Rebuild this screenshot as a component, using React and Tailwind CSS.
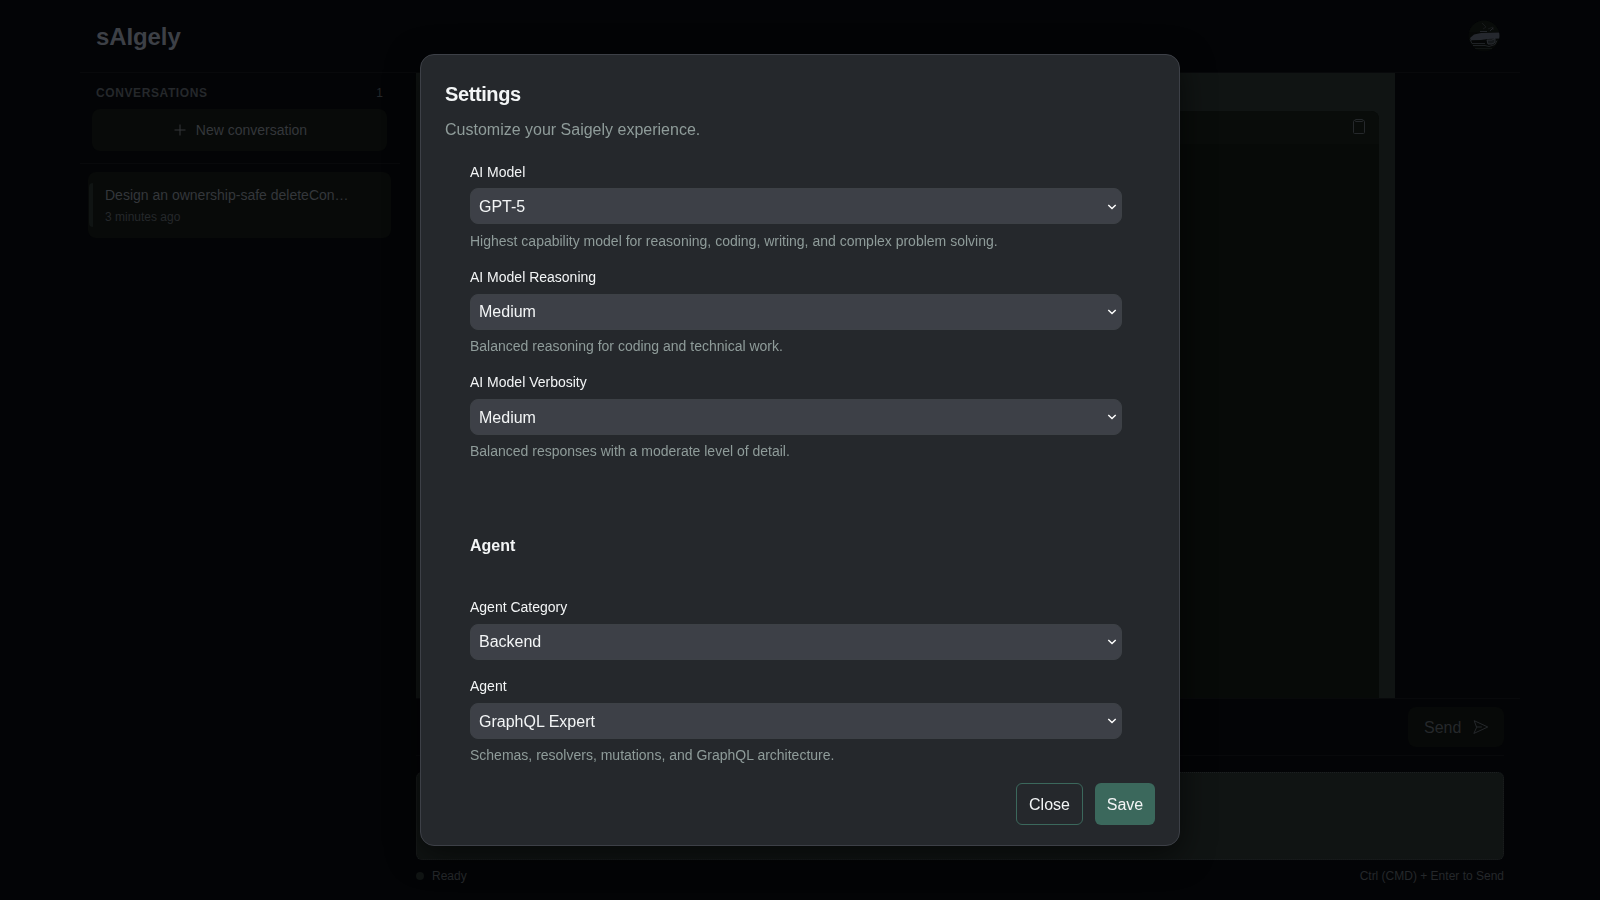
import React from "react";

function Field({ label, value, hint, className }) {
  return (
    <div className={className}>
      <label className="block h-[21px] text-[14px] leading-[21px] text-[#f3f5f6]">{label}</label>
      <div className="mt-[5.6px] grid h-9 items-center">
        <select
          defaultValue={value}
          className="col-start-1 row-start-1 block h-9 w-full appearance-none rounded-lg border border-[#3d4146] bg-[#3d4047] px-2 pt-[1.4px] text-[16px] text-[#f3f5f6] outline-none"
        >
          <option>{value}</option>
        </select>
        <svg
          className="pointer-events-none col-start-1 row-start-1 mr-[5px] mt-[0.6px] h-[6px] w-[10px] justify-self-end text-white"
          viewBox="0 0 10 6"
          fill="none"
          stroke="currentColor"
          strokeWidth="1.400"
        >
          <path d="M1.300 1 5 4.600 8.700 1" />
        </svg>
      </div>
      {hint && <p className="mt-[6.4px] h-[21px] text-[14px] leading-[21px] text-[#8f9c9a]">{hint}</p>}
    </div>
  );
}

function PlusIcon() {
  return (
    <svg className="size-3" viewBox="0 0 12 12" fill="none" stroke="currentColor" strokeWidth="1">
      <path d="M6 0.5v11M0.5 6h11" />
    </svg>
  );
}

function ClipboardIcon() {
  return (
    <svg className="h-4 w-3" viewBox="0 0 12 16" fill="none" stroke="currentColor" strokeWidth="1" strokeLinejoin="round">
      <path d="M2 1.500h-.5a1 1 0 0 0-1 1V13.500a1 1 0 0 0 1 1h9a1 1 0 0 0 1-1V2.500a1 1 0 0 0-1-1H10" />
      <path d="M2.500 .5h7a.5.5 0 0 1 .5.5v.5a1 1 0 0 1-1 1H3a1 1 0 0 1-1-1V1a.5.5 0 0 1 .5-.5z" />
    </svg>
  );
}

function SendIcon() {
  return (
    <svg className="size-4" viewBox="0 0 16 16" fill="none" stroke="currentColor" strokeWidth="1" strokeLinecap="round" strokeLinejoin="round">
      <path d="M3.500 8 1.200 1.700 14.800 8 1.200 14.300z" />
      <path d="M3.500 8h5" />
    </svg>
  );
}

function Avatar() {
  return (
    <svg className="size-8" viewBox="0 0 32 32">
      <defs>
        <clipPath id="avatar">
          <circle cx="16" cy="16" r="15.500" />
        </clipPath>
      </defs>
      <g clipPath="url(#avatar)">
        <rect width="32" height="32" fill="#060807" />
        <path d="M0 0h32v12H0z" fill="#080b09" />
        <path d="M14 3l4 4-3 2M20 9l5-2v3" stroke="#16191a" fill="none" />
        <path d="M2 18l4-3.500 7-1.500 19-.5v6l-12 .5-7 1-10 .5z" fill="#25282e" />
        <path d="M12 11.500h7M22 11l3-3" stroke="#222529" fill="none" />
        <path d="M4 20.500h15v3H5z" fill="#050606" />
        <path d="M2 19.500l2 4h13M5 25.500h12l4 1 6-2 2-4" stroke="#1e2124" fill="none" />
        <path d="M19 20h5l3-1.500v4l-3 1.500h-4z" fill="#15181a" stroke="#2a2d32" />
        <path d="M7 28.500h17" stroke="#101413" />
      </g>
    </svg>
  );
}

function Sidebar() {
  return (
    <aside className="w-[320px] shrink-0">
      <div className="h-[91px] border-b border-[#08090b] pt-[9px]">
        <div className="flex h-[21px] items-center justify-between pl-4 pr-[17px] text-[12px] text-[#25282b]">
          <h2 className="font-bold tracking-[0.6px]">CONVERSATIONS</h2>
          <span>1</span>
        </div>
        <button className="ml-3 mt-[6px] flex h-[42px] w-[295px] items-center justify-center gap-[10px] rounded-lg bg-[#080a09] pl-[2px] text-[14px] text-[#34373b]">
          <PlusIcon />
          New conversation
        </button>
      </div>
      <div className="ml-2 mt-2 flex h-[66px] w-[303px] rounded-lg bg-[#080a09] pl-px pt-[11px]">
        <div className="h-11 w-1 rounded-l-full bg-[#101413]" />
        <div className="ml-3 pt-px">
          <p className="text-[14px] leading-[22px] text-[#34373b]">Design an ownership-safe deleteCon…</p>
          <p className="text-[12px] leading-[22px] text-[#25282b]">3 minutes ago</p>
        </div>
      </div>
    </aside>
  );
}

function Workspace() {
  return (
    <main className="w-[1120px] shrink-0 pl-4">
      <div className="h-[625px] w-[979px] bg-[#101413] pl-4 pr-4 pt-[38px]">
        <div className="h-[587px] rounded-tr-lg bg-[#070a08]">
          <div className="flex h-[33px] justify-end rounded-tr-lg bg-[#090c0a] pr-[14px] pt-2 text-[#25282b]">
            <ClipboardIcon />
          </div>
        </div>
      </div>
      <div className="h-px bg-[#08090b]" />
      <div className="mr-4 flex h-[57px] justify-end border-b border-[#08090b] pt-2">
        <button className="flex h-10 w-24 items-center gap-3 rounded-lg bg-[#070908] pl-4 text-[16px] text-[#25282b]">
          <span className="pt-[2px]">Send</span>
          <SendIcon />
        </button>
      </div>
      <div className="mr-4 mt-4 h-[88px] rounded-md border border-dotted border-[#1c1f21] bg-[#101413]" />
      <div className="mr-4 mt-[6px] flex h-5 items-center justify-between text-[12px] text-[#25282b]">
        <span className="flex items-center gap-2">
          <i className="size-2 rounded-full bg-[#101413]" />
          Ready
        </span>
        <span>Ctrl (CMD) + Enter to Send</span>
      </div>
    </main>
  );
}

function SettingsDialog() {
  return (
    <div className="fixed inset-0 flex items-center justify-center">
      <section className="h-[792px] w-[760px] rounded-[14px] border border-[#3d4047] bg-[#25282c] px-6 shadow-[0_8px_32px_rgba(0,0,0,0.6)]">
        <h1 className="mt-[24px] h-[30px] text-[20px] font-bold leading-[30px] tracking-[-0.4px] text-[#f3f5f6]">Settings</h1>
        <p className="mt-[9px] h-6 text-[16px] leading-6 text-[#8f9c9a]">Customize your Saigely experience.</p>
        <div className="h-[609px] pl-[25px] pr-[33px] pt-[19.7px]">
          <Field className="h-[105.3px]" label="AI Model" value="GPT-5" hint="Highest capability model for reasoning, coding, writing, and complex problem solving." />
          <Field className="h-[105.3px]" label="AI Model Reasoning" value="Medium" hint="Balanced reasoning for coding and technical work." />
          <Field className="h-[162.2px]" label="AI Model Verbosity" value="Medium" hint="Balanced responses with a moderate level of detail." />
          <h2 className="h-[62.6px] text-[16px] font-bold leading-6 text-[#f3f5f6]">Agent</h2>
          <Field className="h-[79.3px]" label="Agent Category" value="Backend" />
          <Field label="Agent" value="GraphQL Expert" hint="Schemas, resolvers, mutations, and GraphQL architecture." />
        </div>
        <div className="mt-[32px] flex justify-end gap-3 text-[16px] text-[#f3f5f6]">
          <button className="h-[42px] w-[67px] rounded-md border border-[#3b685c] pt-[2px]">Close</button>
          <button className="h-[42px] w-[60px] rounded-md bg-[#3b685c] pt-[2px]">Save</button>
        </div>
      </section>
    </div>
  );
}

export default function App() {
  return (
    <div className="h-screen overflow-hidden bg-[#030406] font-['Liberation_Sans',Arial,sans-serif]">
      <div className="mx-auto w-[1440px]">
        <header className="flex h-[73px] items-center justify-between border-b border-[#08090b] pl-4 pr-5">
          <div className="pt-[2px] text-[24px] font-bold tracking-[-0.1px] text-[#3d4046]">sAIgely</div>
          <Avatar />
        </header>
        <div className="flex">
          <Sidebar />
          <Workspace />
        </div>
      </div>
      <SettingsDialog />
    </div>
  );
}
